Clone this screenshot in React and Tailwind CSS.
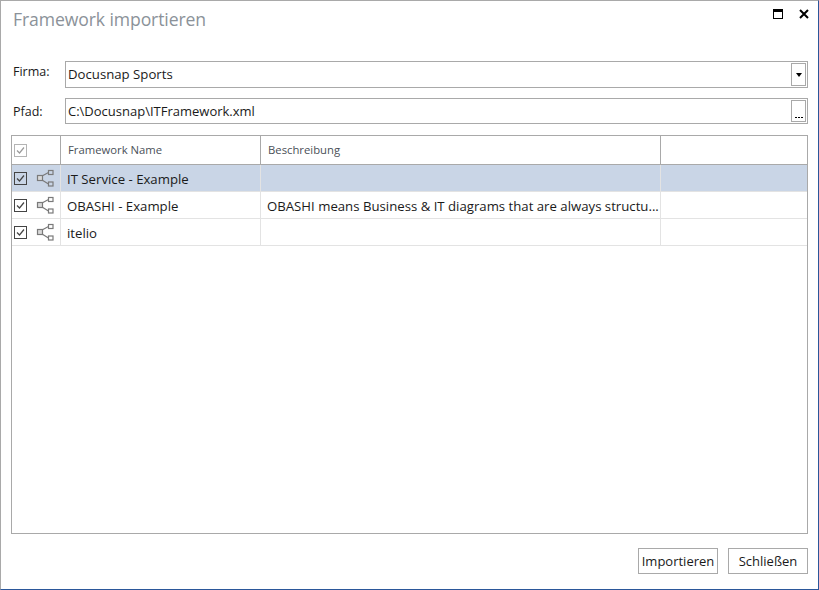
import React from 'react';

const font = { fontFamily: '"Open Sans", sans-serif' };

const ShareIcon = () => (
  <svg width="18" height="18" viewBox="0 0 18 18" fill="none" stroke="#7a7a7a" strokeWidth="1.2">
    <rect x="1.5" y="6.5" width="5" height="5" fill="#d9d9d9" />
    <rect x="12.5" y="1.5" width="4.5" height="4" />
    <rect x="12.5" y="13" width="4.5" height="4" />
    <path d="M6 7 L12.5 3.5 M6 11 L12.5 15" />
  </svg>
);

const Check = ({ muted }) => (
  <div className={`w-[13px] h-[13px] border flex items-center justify-center ${muted ? 'border-[#b4b4b4]' : 'border-[#444444]'}`}>
    <svg width="11" height="11" viewBox="0 0 11 11" fill="none" stroke={muted ? '#9a9a9a' : '#444444'} strokeWidth="1.2">
      <path d="M2 5.5 L4.5 8 L9 2.5" />
    </svg>
  </div>
);

const rows = [
  { name: 'IT Service - Example', desc: '', selected: true },
  { name: 'OBASHI - Example', desc: 'OBASHI means Business & IT diagrams that are always structu...' },
  { name: 'itelio', desc: '' },
];

export default function App() {
  return (
    <div className="w-[819px] h-[590px] bg-white border border-t-[#a9a9a9] border-l-[#a9a9a9] border-r-[#2b579a] border-b-[#2b579a] flex flex-col text-[#1a1a1a]" style={font}>
      <div className="flex items-start justify-between h-[60px] pl-[12px] pr-[9px]">
        <div className="text-[17.6px] leading-[24px] mt-[6px] text-[#8b9299] tracking-[-0.1px]">Framework importieren</div>
        <div className="flex items-center gap-[16px] mt-[8px]">
          <div className="w-[10px] h-[10px] border border-black border-t-[3px]" />
          <svg width="10" height="10" viewBox="0 0 10 10" stroke="black" strokeWidth="2">
            <path d="M1 1 L9 9 M9 1 L1 9" />
          </svg>
        </div>
      </div>

      <div className="flex items-center h-[27px] pl-[12px] pr-[10px]">
        <div className="w-[52px] text-[12.5px] -mt-[5px]">Firma:</div>
        <div className="flex-1 h-[27px] border border-[#a9a9a9] flex items-center justify-between pl-[2px] pr-[1px]">
          <span className="text-[13.2px] mt-[1px]">Docusnap Sports</span>
          <div className="w-[15px] h-[23px] border border-[#a9a9a9] flex items-center justify-center">
            <div className="w-0 h-0 border-l-[3px] border-r-[3px] border-t-[4px] border-l-transparent border-r-transparent border-t-black" />
          </div>
        </div>
      </div>

      <div className="flex items-center h-[26px] mt-[10px] pl-[12px] pr-[10px]">
        <div className="w-[52px] text-[12.5px] mt-[3px]">Pfad:</div>
        <div className="flex-1 h-[26px] border border-[#a9a9a9] flex items-center justify-between pl-[2px] pr-[1px]">
          <span className="text-[13px] mt-[1px]">C:\Docusnap\ITFramework.xml</span>
          <div className="w-[15px] h-[22px] border border-[#a9a9a9] flex items-end justify-center pb-[3px] gap-[1px]">
            <span className="w-[2px] h-[1px] bg-black" />
            <span className="w-[2px] h-[1px] bg-black" />
            <span className="w-[2px] h-[1px] bg-black" />
          </div>
        </div>
      </div>

      <div className="mt-[11px] mx-[10px] h-[399px] border border-[#a9a9a9] flex flex-col">
        <div className="flex h-[29px] border-b border-[#a9a9a9] text-[11.3px] text-[#4a5058] shrink-0">
          <div className="w-[49px] border-r border-[#a9a9a9] pl-[2px] flex items-center"><Check muted /></div>
          <div className="w-[200px] border-r border-[#a9a9a9] pl-[7px] flex items-center pt-[1px]">Framework Name</div>
          <div className="w-[400px] border-r border-[#a9a9a9] pl-[7px] flex items-center pt-[1px]">Beschreibung</div>
        </div>
        {rows.map((r) => (
          <div key={r.name} className={`flex h-[27px] border-b border-[#e3e3e3] text-[13.2px] shrink-0 ${r.selected ? 'bg-[#c9d5e6]' : ''}`}>
            <div className="w-[49px] border-r border-[#e3e3e3] pl-[2px] flex items-center gap-[9px]">
              <Check />
              <ShareIcon />
            </div>
            <div className="w-[200px] border-r border-[#e3e3e3] pl-[6px] flex items-center pt-[4px]">{r.name}</div>
            <div className="w-[400px] border-r border-[#e3e3e3] pl-[6px] flex items-center pt-[4px] whitespace-nowrap overflow-hidden">{r.desc}</div>
          </div>
        ))}
      </div>

      <div className="flex justify-end gap-[10px] mt-[14px] pr-[10px]">
        <button className="w-[80px] h-[26px] border border-[#a9a9a9] text-[13px] pt-[2px]">Importieren</button>
        <button className="w-[80px] h-[26px] border border-[#a9a9a9] text-[13px] pt-[2px]">Schließen</button>
      </div>
    </div>
  );
}
